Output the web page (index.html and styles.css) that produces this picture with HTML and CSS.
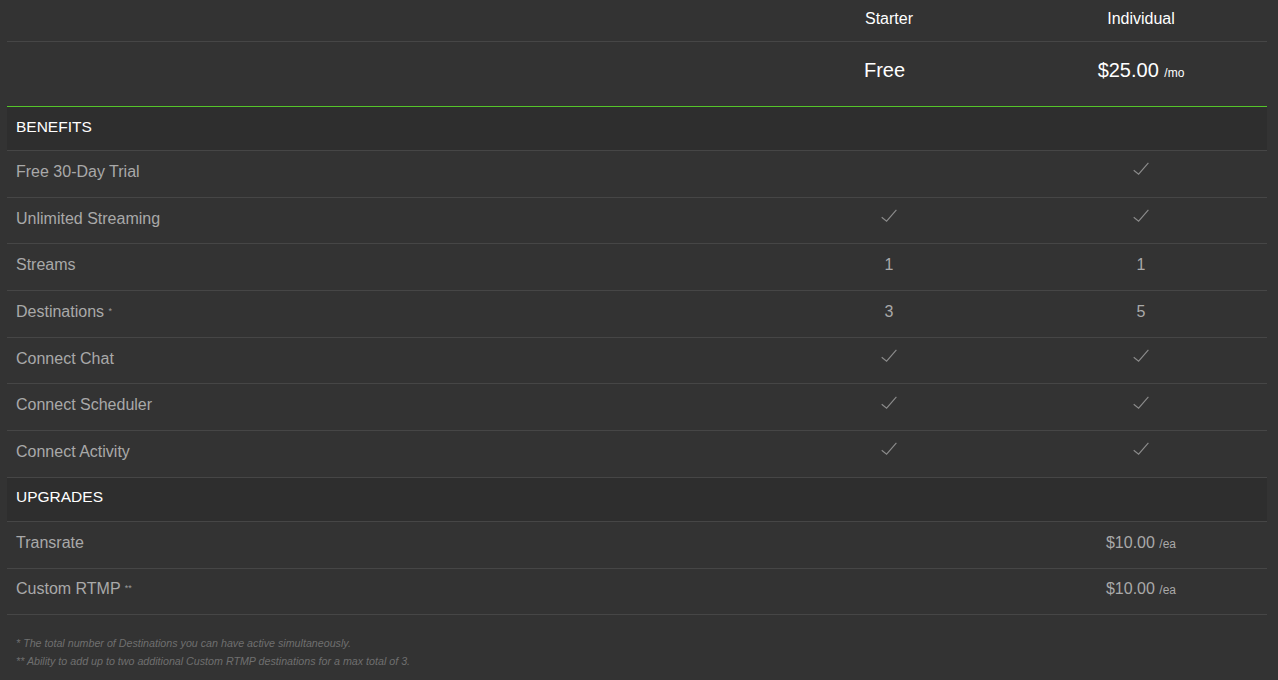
FILE: index.html
```html
<!DOCTYPE html>
<html>
<head>
<meta charset="utf-8">
<link rel="stylesheet" href="styles.css">
</head>
<body>
<div class="page">
  <div class="plans">
    <div class="row head names">
      <div class="cell label"></div>
      <div class="cell">Starter</div>
      <div class="cell">Individual</div>
    </div>
    <div class="row head prices">
      <div class="cell label"></div>
      <div class="cell"><span class="free">Free</span></div>
      <div class="cell"><span class="price">$25.00 <span class="unit">/mo</span></span></div>
    </div>
    <div class="row section"><div class="cell label">BENEFITS</div></div>
    <div class="row feature">
      <div class="cell label">Free 30-Day Trial</div>
      <div class="cell"></div>
      <div class="cell"><svg class="check" viewBox="0 0 16 13" width="16" height="13"><path d="M0.7 8.2 L5.6 12.2 L15.4 0.8"/></svg></div>
    </div>
    <div class="row feature">
      <div class="cell label">Unlimited Streaming</div>
      <div class="cell"><svg class="check" viewBox="0 0 16 13" width="16" height="13"><path d="M0.7 8.2 L5.6 12.2 L15.4 0.8"/></svg></div>
      <div class="cell"><svg class="check" viewBox="0 0 16 13" width="16" height="13"><path d="M0.7 8.2 L5.6 12.2 L15.4 0.8"/></svg></div>
    </div>
    <div class="row feature">
      <div class="cell label">Streams</div>
      <div class="cell">1</div>
      <div class="cell">1</div>
    </div>
    <div class="row feature">
      <div class="cell label"><span>Destinations <span class="mark">*</span></span></div>
      <div class="cell">3</div>
      <div class="cell">5</div>
    </div>
    <div class="row feature">
      <div class="cell label">Connect Chat</div>
      <div class="cell"><svg class="check" viewBox="0 0 16 13" width="16" height="13"><path d="M0.7 8.2 L5.6 12.2 L15.4 0.8"/></svg></div>
      <div class="cell"><svg class="check" viewBox="0 0 16 13" width="16" height="13"><path d="M0.7 8.2 L5.6 12.2 L15.4 0.8"/></svg></div>
    </div>
    <div class="row feature">
      <div class="cell label">Connect Scheduler</div>
      <div class="cell"><svg class="check" viewBox="0 0 16 13" width="16" height="13"><path d="M0.7 8.2 L5.6 12.2 L15.4 0.8"/></svg></div>
      <div class="cell"><svg class="check" viewBox="0 0 16 13" width="16" height="13"><path d="M0.7 8.2 L5.6 12.2 L15.4 0.8"/></svg></div>
    </div>
    <div class="row feature">
      <div class="cell label">Connect Activity</div>
      <div class="cell"><svg class="check" viewBox="0 0 16 13" width="16" height="13"><path d="M0.7 8.2 L5.6 12.2 L15.4 0.8"/></svg></div>
      <div class="cell"><svg class="check" viewBox="0 0 16 13" width="16" height="13"><path d="M0.7 8.2 L5.6 12.2 L15.4 0.8"/></svg></div>
    </div>
    <div class="row section"><div class="cell label">UPGRADES</div></div>
    <div class="row feature">
      <div class="cell label">Transrate</div>
      <div class="cell"></div>
      <div class="cell"><span class="price">$10.00 <span class="unit">/ea</span></span></div>
    </div>
    <div class="row feature">
      <div class="cell label"><span>Custom RTMP <span class="mark">**</span></span></div>
      <div class="cell"></div>
      <div class="cell"><span class="price">$10.00 <span class="unit">/ea</span></span></div>
    </div>
  </div>
  <div class="notes">
    <p>* The total number of Destinations you can have active simultaneously.</p>
    <p>** Ability to add up to two additional Custom RTMP destinations for a max total of 3.</p>
  </div>
</div>
</body>
</html>
```

FILE: styles.css
```css
html, body {
  margin: 0;
  padding: 0;
  background: #333333;
}
body {
  font-family: "Liberation Sans", Arial, Helvetica, sans-serif;
  color: #a9a9a9;
}
.page {
  width: 1260px;
  margin-left: 7px;
}
.plans {
  display: flex;
  flex-direction: column;
}
.row {
  display: grid;
  grid-template-columns: 756px 252px 252px;
  border-bottom: 1px solid #464646;
}
.cell {
  display: flex;
  align-items: center;
  justify-content: center;
}
.cell.label {
  justify-content: flex-start;
  padding-left: 9px;
}

.head .cell {
  color: #ffffff;
}
.names {
  height: 42px;
  box-sizing: border-box;
}
.names .cell {
  font-size: 16px;
  align-items: flex-start;
  padding-top: 10px;
}
.prices {
  height: 65px;
  box-sizing: border-box;
  border-bottom-color: #55c52a;
}
.prices .cell {
  font-size: 20px;
  align-items: flex-start;
  padding-top: 17px;
}
.prices .free {
  margin-right: 9px;
}
.price .unit {
  font-size: 12px;
}

.section {
  display: block;
  height: 44px;
  box-sizing: border-box;
  background: #2e2e2e;
}
.section .cell {
  height: 100%;
  color: #ffffff;
  font-size: 15.5px;
  padding-bottom: 4px;
  box-sizing: border-box;
}

.feature {
  height: 46.7px;
  box-sizing: border-box;
}
.feature .cell {
  font-size: 16px;
  color: #a9a9a9;
  padding-bottom: 4px;
}
.feature .mark {
  font-size: 9px;
  vertical-align: 3px;
  color: #9a9a9a;
}
.check {
  display: block;
  margin-top: -6px;
}
.check path {
  fill: none;
  stroke: #8c8c8c;
  stroke-width: 1.1;
}

.notes {
  padding: 19px 0 0 9px;
}
.notes p {
  margin: 0;
  font-size: 10.7px;
  line-height: 18px;
  font-style: italic;
  color: #6f6f6f;
}
```
